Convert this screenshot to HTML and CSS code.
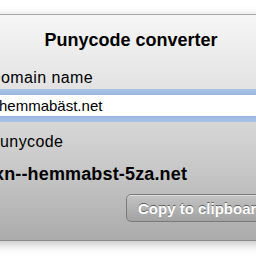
FILE: index.html
```html
<!DOCTYPE html>
<html lang="en">
<head>
    <meta charset="UTF-8">
    <meta name="viewport" content="width=device-width, initial-scale=1.0">
    <title>Punycode converter</title>
    <link rel="stylesheet" href="styles.css">
</head>
<body>

<div class="window">
    <h2 class="title">Punycode converter</h2>
    <label class="field-label" for="domain">Domain name</label>
    <div class="input-ring">
        <input type="text" id="domain" class="domain-input" value="hemmabäst.net">
    </div>
    <div class="field-label punycode-label">Punycode</div>
    <div class="result">xn--hemmabst-5za.net</div>
    <div class="actions">
        <button class="copy-button">Copy to clipboard</button>
    </div>
</div>

</body>
</html>
```

FILE: styles.css
```css
html, body {
    margin: 0;
    padding: 0;
    background: #fff;
    overflow: hidden;
    width: 256px;
    height: 256px;
}
body {
    font-family: "Liberation Sans", Arial, sans-serif;
    color: #000;
}
.window {
    margin-top: 14px;
    margin-left: -12px;
    width: 286px;
    height: 225px;
    border-top: 1px solid #a9a9a9;
    border-bottom: 1px solid #8a8a8a;
    background: linear-gradient(#f6f6f6, #e4e4e4 30%, #c6c6c6 70%, #ababab);
    box-shadow: 0 3px 10px rgba(0, 0, 0, 0.25);
    display: flex;
    flex-direction: column;
}
.title {
    margin: 15px 0 0;
    font-size: 18px;
    font-weight: bold;
    text-align: center;
    line-height: 20px;
}
.field-label {
    display: block;
    margin: 18px 0 0 1px;
    font-size: 16px;
    line-height: 20px;
    letter-spacing: 0.4px;
}
.input-ring {
    margin: 1px 0 0 -4px;
    padding: 0;
    border-top: 6px solid transparent;
    border-bottom: 6px solid transparent;
    border-image: linear-gradient(#a9c4e6, #7c9fd2 50%, #a9c4e6) 6;
    background: #fff;
}
.domain-input {
    display: block;
    box-sizing: border-box;
    width: 100%;
    height: 21px;
    border: none;
    outline: none;
    background: #fff;
    padding: 0 0 0 15px;
    font-family: "Liberation Sans", Arial, sans-serif;
    font-size: 15px;
    color: #000;
}
.punycode-label {
    margin-top: 10px;
}
.result {
    margin: 11px 0 0 6px;
    font-size: 18px;
    font-weight: bold;
    line-height: 22px;
    letter-spacing: 0.15px;
}
.actions {
    display: flex;
    margin: 9px 0 0 138px;
}
.copy-button {
    height: 28px;
    width: 160px;
    padding: 0 0 0 11px;
    text-align: left;
    border: 1px solid #7a7a7a;
    border-radius: 5px;
    background: linear-gradient(#c4c4c4, #a2a2a2);
    box-shadow: inset 0 1px 0 rgba(255, 255, 255, 0.45);
    color: #fff;
    font-family: "Liberation Sans", Arial, sans-serif;
    font-size: 15px;
    font-weight: bold;
    text-shadow: 0 -1px 0 #5e5e5e;
}
```
